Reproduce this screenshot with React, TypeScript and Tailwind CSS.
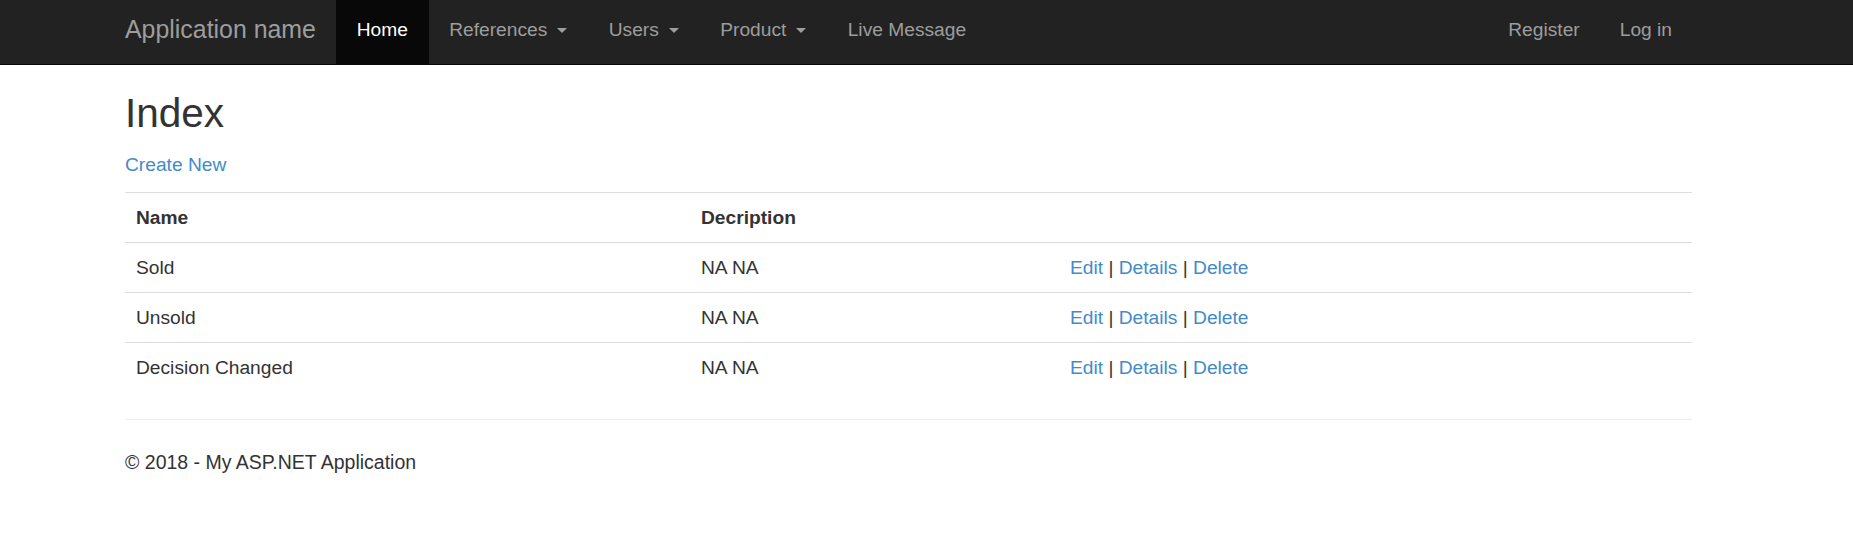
import React from "react";

const navLinks = [
  { label: "Home", active: true },
  { label: "References", caret: true },
  { label: "Users", caret: true },
  { label: "Product", caret: true },
  { label: "Live Message" },
];

const rows = [
  { name: "Sold", description: "NA NA" },
  { name: "Unsold", description: "NA NA" },
  { name: "Decision Changed", description: "NA NA" },
];

const Caret = () => (
  <span className="ml-[10px] inline-block h-0 w-0 border-x-[5.5px] border-t-[5.5px] border-x-transparent border-t-current align-middle" />
);

export default function App() {
  return (
    <div className="min-h-screen bg-white font-['Liberation_Sans',Arial,sans-serif] text-[19.2px] leading-[27px] text-[#333]">
      {/* Navbar */}
      <nav className="h-[65px] border-b border-[#080808] bg-[#222]">
        <div className="ml-[125px] flex h-16 w-[1567px] items-stretch">
          <a className="pt-[16px] pr-5 text-[24.9px] leading-[27px] text-[#9d9d9d]">
            Application name
          </a>
          <ul className="flex items-stretch">
            {navLinks.map((item) => (
              <li key={item.label} className="flex">
                <a
                  className={`block whitespace-nowrap px-[20.7px] pt-[16px] ${
                    item.active ? "bg-[#080808] text-white" : "text-[#9d9d9d]"
                  }`}
                >
                  {item.label}
                  {item.caret && <Caret />}
                </a>
              </li>
            ))}
          </ul>
          <ul className="ml-auto flex items-stretch">
            <li className="flex">
              <a className="px-5 pt-[16px] text-[#9d9d9d]">Register</a>
            </li>
            <li className="flex">
              <a className="px-5 pt-[16px] text-[#9d9d9d]">Log in</a>
            </li>
          </ul>
        </div>
      </nav>

      {/* Body */}
      <div className="ml-[125px] w-[1567px]">
        <h2 className="mt-[26px] mb-[15px] text-[40.5px] leading-[1.1] font-normal">
          Index
        </h2>
        <p className="mb-[14px]">
          <a className="text-[#428bca]">Create New</a>
        </p>
        <table className="w-full table-fixed border-collapse">
          <colgroup>
            <col className="w-[565px]" />
            <col className="w-[369px]" />
            <col />
          </colgroup>
          <tbody>
            <tr>
              <th className="border-t border-[#ddd] px-[11px] py-[11px] text-left font-bold">
                Name
              </th>
              <th className="border-t border-[#ddd] px-[11px] py-[11px] text-left font-bold">
                Decription
              </th>
              <th className="border-t border-[#ddd] px-[11px] py-[11px]"></th>
            </tr>
            {rows.map((row) => (
              <tr key={row.name}>
                <td className="border-t border-[#ddd] px-[11px] py-[11px]">{row.name}</td>
                <td className="border-t border-[#ddd] px-[11px] py-[11px]">
                  {row.description}
                </td>
                <td className="border-t border-[#ddd] px-[11px] py-[11px]">
                  <a className="text-[#428bca]">Edit</a> |{" "}
                  <a className="text-[#428bca]">Details</a> |{" "}
                  <a className="text-[#428bca]">Delete</a>
                </td>
              </tr>
            ))}
          </tbody>
        </table>
        <hr className="mt-[27px] border-t border-[#eee]" />
        <footer className="mt-[29px]">
          <p className="text-[19.5px]">© 2018 - My ASP.NET Application</p>
        </footer>
      </div>
    </div>
  );
}
